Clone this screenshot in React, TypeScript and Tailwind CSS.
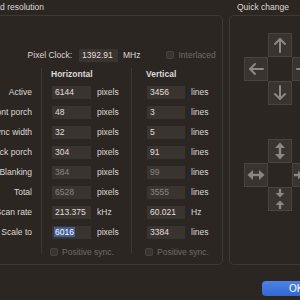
type Row = {
  label: string;
  h: string;
  hu: string;
  v: string;
  vu: string;
  dim?: boolean;
  sel?: boolean;
};

const rows: Row[] = [
  { label: "Active", h: "6144", hu: "pixels", v: "3456", vu: "lines" },
  { label: "Front porch", h: "48", hu: "pixels", v: "3", vu: "lines" },
  { label: "Sync width", h: "32", hu: "pixels", v: "5", vu: "lines" },
  { label: "Back porch", h: "304", hu: "pixels", v: "91", vu: "lines" },
  { label: "Blanking", h: "384", hu: "pixels", v: "99", vu: "lines", dim: true },
  { label: "Total", h: "6528", hu: "pixels", v: "3555", vu: "lines", dim: true },
  { label: "Scan rate", h: "213.375", hu: "kHz", v: "60.021", vu: "Hz" },
  { label: "Scale to", h: "6016", hu: "pixels", v: "3384", vu: "lines", sel: true },
];

function Field({ value, dim, sel, w }: { value: string; dim?: boolean; sel?: boolean; w: string }) {
  return (
    <div
      className={`${w} h-[13px] bg-[#3a3431] flex items-center pl-[3px] ${
        dim ? "text-[#8a8480]" : "text-[#e2deda]"
      }`}
    >
      {sel ? <span className="bg-[#3f5f96] text-white px-[1px] -ml-[1px] leading-[10px]">{value}</span> : value}
    </div>
  );
}

function Check({ label }: { label: string }) {
  return (
    <div className="flex items-center gap-[4px] text-[#6f6a66]">
      <div className="w-[8px] h-[8px] rounded-[2px] bg-[#3a3431] border border-[#48423e]" />
      <span>{label}</span>
    </div>
  );
}

const stroke = "#8d8783";

function Cell({ children }: { children?: React.ReactNode }) {
  return (
    <div className="w-[24px] h-[24px] border border-[#4a4440] bg-[#3a3431] flex items-center justify-center">
      <svg width="24" height="24" viewBox="0 0 24 24" className="-m-px shrink-0">
        {children}
      </svg>
    </div>
  );
}

function Pad({ up, left, right, down }: { up: React.ReactNode; left: React.ReactNode; right: React.ReactNode; down: React.ReactNode }) {
  return (
    <div className="grid grid-cols-[24px_24px_24px] grid-rows-[24px_24px_24px]">
      <div />
      <Cell>{up}</Cell>
      <div />
      <Cell>{left}</Cell>
      <div />
      <Cell>{right}</Cell>
      <div />
      <Cell>{down}</Cell>
      <div />
    </div>
  );
}

const arrowProps = {
  fill: "none",
  stroke,
  strokeWidth: 2,
  strokeLinecap: "round" as const,
  strokeLinejoin: "round" as const,
};

export default function App() {
  return (
    <div className="w-[300px] h-[300px] overflow-hidden bg-[#2c2623] font-['Liberation_Sans',_Arial,_sans-serif] text-[8.5px] text-[#dcd8d4]">
      <div className="flex h-[15px] items-center">
        <div className="w-[44px] shrink-0 flex justify-end overflow-visible whitespace-nowrap">
          <span>Scaled resolution</span>
        </div>
        <span className="ml-[193px] whitespace-nowrap">Quick change</span>
      </div>

      <div className="flex">
        <div className="ml-[-80px] w-[303px] shrink-0 h-[250px] border border-[#3e3834] rounded-[5px] pl-[19px] pt-[32px]">
          <div className="flex items-center h-[14px] whitespace-nowrap">
            <div className="w-[132px] text-right">Pixel Clock:</div>
            <div className="ml-[7px]">
              <Field value="1392.91" w="w-[39px]" />
            </div>
            <span className="ml-[5px]">MHz</span>
            <div className="ml-[26px]">
              <Check label="Interlaced" />
            </div>
          </div>

          <div className="flex mt-[4px] whitespace-nowrap">
            <div className="w-[92px] flex flex-col">
              <div className="h-[16px]" />
              {rows.map((r) => (
                <div key={r.label} className="h-[20px] flex items-center justify-end">
                  {r.label}
                </div>
              ))}
            </div>
            <div className="ml-[9px] mt-[2px] w-px h-[185px] bg-[#3d3733]" />
            <div className="w-[89px] flex flex-col">
              <div className="h-[16px] flex items-center pl-[9px] font-bold">Horizontal</div>
              {rows.map((r) => (
                <div key={r.label} className="h-[20px] flex items-center pl-[10px] gap-[6px]">
                  <Field value={r.h} dim={r.dim} sel={r.sel} w="w-[39px]" />
                  <span>{r.hu}</span>
                </div>
              ))}
              <div className="h-[20px] flex items-center pl-[8px]">
                <Check label="Positive sync." />
              </div>
            </div>
            <div className="mt-[2px] w-px h-[185px] bg-[#3d3733]" />
            <div className="flex flex-col">
              <div className="h-[16px] flex items-center pl-[14px] font-bold">Vertical</div>
              {rows.map((r) => (
                <div key={r.label} className="h-[20px] flex items-center pl-[15px] gap-[6px]">
                  <Field value={r.v} dim={r.dim} w="w-[38px]" />
                  <span>{r.vu}</span>
                </div>
              ))}
              <div className="h-[20px] flex items-center pl-[13px]">
                <Check label="Positive sync." />
              </div>
            </div>
          </div>
        </div>

        <div className="ml-[6px] w-[100px] shrink-0 h-[250px] border border-[#3e3834] rounded-[5px] pl-[14px] pt-[17px]">
          <Pad
            up={
              <g {...arrowProps}>
                <path d="M12 19V6" />
                <path d="M7 11l5-5 5 5" />
              </g>
            }
            left={
              <g {...arrowProps}>
                <path d="M19 12H6" />
                <path d="M11 7l-5 5 5 5" />
              </g>
            }
            right={
              <g {...arrowProps}>
                <path d="M5 12h13" />
                <path d="M13 7l5 5-5 5" />
              </g>
            }
            down={
              <g {...arrowProps}>
                <path d="M12 5v13" />
                <path d="M7 13l5 5 5-5" />
              </g>
            }
          />
          <div className="mt-[34px]">
            <Pad
              up={
                <g>
                  <rect x="10.8" y="8" width="2.4" height="8" fill={stroke} />
                  <path d="M7 9l5-5.5 5 5.5z" fill={stroke} />
                  <path d="M7 15l5 5.5 5-5.5z" fill={stroke} />
                </g>
              }
              left={
                <g>
                  <rect x="8" y="10.8" width="8" height="2.4" fill={stroke} />
                  <path d="M9 7l-5.5 5 5.5 5z" fill={stroke} />
                  <path d="M15 7l5.5 5-5.5 5z" fill={stroke} />
                </g>
              }
              right={
                <g>
                  <rect x="2" y="10.8" width="5" height="2.4" fill={stroke} />
                  <path d="M6 7.5l4.5 4.5-4.5 4.5z" fill={stroke} />
                  <rect x="17" y="10.8" width="5" height="2.4" fill={stroke} />
                  <path d="M18 7.5l-4.5 4.5 4.5 4.5z" fill={stroke} />
                </g>
              }
              down={
                <g>
                  <rect x="10.8" y="2" width="2.4" height="5" fill={stroke} />
                  <path d="M7.5 6l4.5 4.5 4.5-4.5z" fill={stroke} />
                  <rect x="10.8" y="17" width="2.4" height="5" fill={stroke} />
                  <path d="M7.5 18l4.5-4.5 4.5 4.5z" fill={stroke} />
                </g>
              }
            />
          </div>
        </div>
      </div>

      <div className="flex mt-[16px]">
        <button className="ml-[262px] w-[60px] h-[15px] shrink-0 rounded-[4px] bg-gradient-to-b from-[#4f82e6] to-[#3367d2] text-white text-[10px] text-left pl-[27px] leading-[15px]">
          OK
        </button>
      </div>
    </div>
  );
}
